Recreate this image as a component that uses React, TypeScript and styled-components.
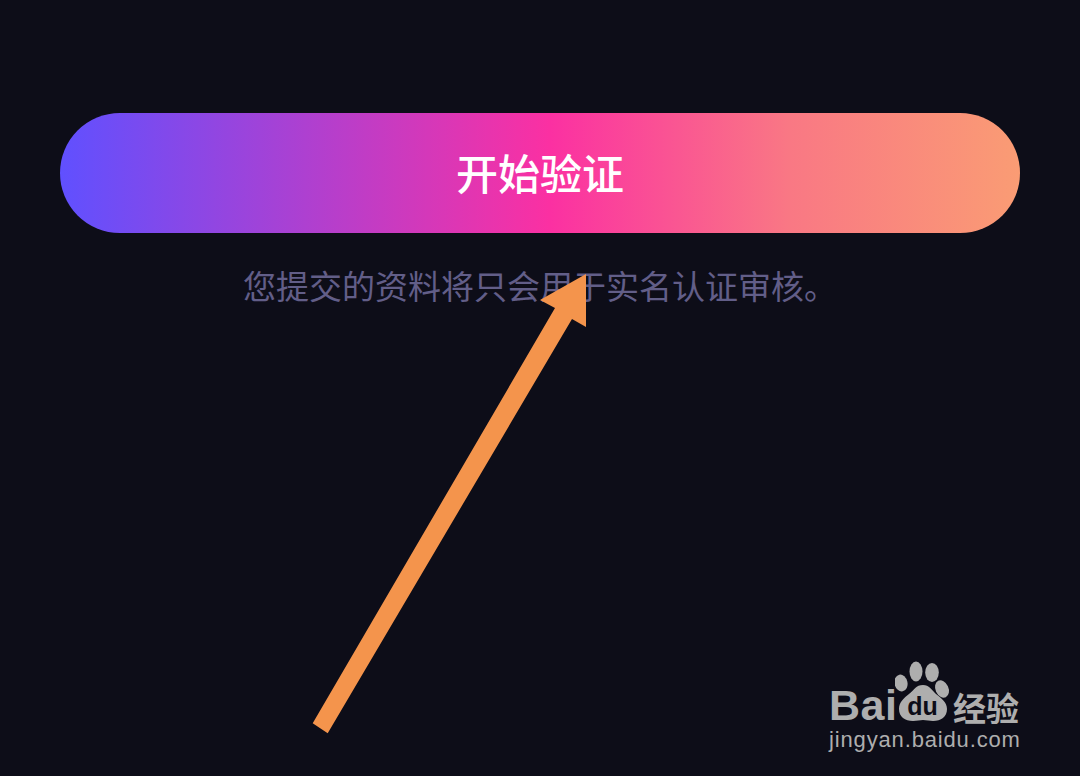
import React from 'react';
import styled, { createGlobalStyle } from 'styled-components';

const GlobalStyle = createGlobalStyle`
  html, body {
    margin: 0;
    padding: 0;
    background: #0d0d18;
  }
`;

const Page = styled.div`
  position: relative;
  width: 1080px;
  height: 776px;
  overflow: hidden;
  box-sizing: border-box;
  padding: 113px 60px 0;
  background: #0d0d18;
  font-family: "Noto Sans CJK SC", "Noto Sans", sans-serif;
`;

const VerifyButton = styled.button`
  display: block;
  width: 960px;
  height: 120px;
  padding: 0 0 4px;
  border: none;
  border-radius: 60px;
  background: linear-gradient(90deg, #6050ff 0%, #fb30a2 51%, #f97884 76%, #fa9c74 100%);
  color: #ffffff;
  font-family: inherit;
  font-size: 42px;
  font-weight: 500;
`;

const Notice = styled.p`
  margin: 28px 0 0;
  text-align: center;
  color: #625e88;
  font-size: 33px;
  line-height: 48px;
`;

const ArrowOverlay = styled.svg`
  position: absolute;
  left: 0;
  top: 0;
  pointer-events: none;
`;

const Watermark = styled.div`
  position: absolute;
  left: 829px;
  top: 660px;
  width: 194px;
  color: #aeaeae;
`;

const LogoRow = styled.div`
  display: flex;
  align-items: flex-end;
  height: 64px;
`;

const BaiText = styled.span`
  font-family: "Liberation Sans", Arial, sans-serif;
  font-size: 43px;
  font-weight: 700;
  line-height: 48px;
  letter-spacing: 0.5px;
  width: 66px;
  margin-bottom: -5px;
`;

const PawMark = styled.svg`
  flex: none;
`;

const JingyanText = styled.span`
  font-family: "Noto Sans CJK SC", sans-serif;
  font-size: 33px;
  font-weight: 700;
  line-height: 36px;
  margin-bottom: -1px;
  white-space: nowrap;
`;

const SiteText = styled.div`
  margin-top: 3px;
  font-family: "Liberation Sans", Arial, sans-serif;
  font-size: 22px;
  line-height: 26px;
  letter-spacing: 0.85px;
  white-space: nowrap;
`;

export default function App() {
  return (
    <Page>
      <GlobalStyle />
      <VerifyButton>开始验证</VerifyButton>
      <Notice>您提交的资料将只会用于实名认证审核。</Notice>
      <ArrowOverlay width="1080" height="776" viewBox="0 0 1080 776">
        <polygon
          fill="#f4944c"
          points="586,274 586,327 572,319 327.7,733.3 312.7,723.3 555,308 540,300"
        />
      </ArrowOverlay>
      <Watermark>
        <LogoRow>
          <BaiText>Bai</BaiText>
          <PawMark width="58" height="64" viewBox="0 0 58 64">
            <ellipse cx="6" cy="23" rx="6.5" ry="8.5" fill="#aeaeae" transform="rotate(-12 6 23)" />
            <ellipse cx="21" cy="11.5" rx="6.5" ry="10" fill="#aeaeae" />
            <ellipse cx="37" cy="12.5" rx="6.8" ry="9.5" fill="#aeaeae" />
            <ellipse cx="47" cy="29" rx="6.5" ry="9" fill="#aeaeae" transform="rotate(-25 47 29)" />
            <path
              d="M28 25c6 0 9 5 13 9 5 4 11 8 11 15 0 8-6 12-14 12-3 0-7-1-10-1s-6 1-10 1C10 61 4 57 4 49c0-7 5-11 10-15 5-4 7-9 14-9z"
              fill="#aeaeae"
            />
            <text
              x="27.5"
              y="55"
              textAnchor="middle"
              fontFamily="Liberation Sans, Arial, sans-serif"
              fontSize="25"
              fontWeight="700"
              fill="#0d0d18"
            >
              du
            </text>
          </PawMark>
          <JingyanText>经验</JingyanText>
        </LogoRow>
        <SiteText>jingyan.baidu.com</SiteText>
      </Watermark>
    </Page>
  );
}
